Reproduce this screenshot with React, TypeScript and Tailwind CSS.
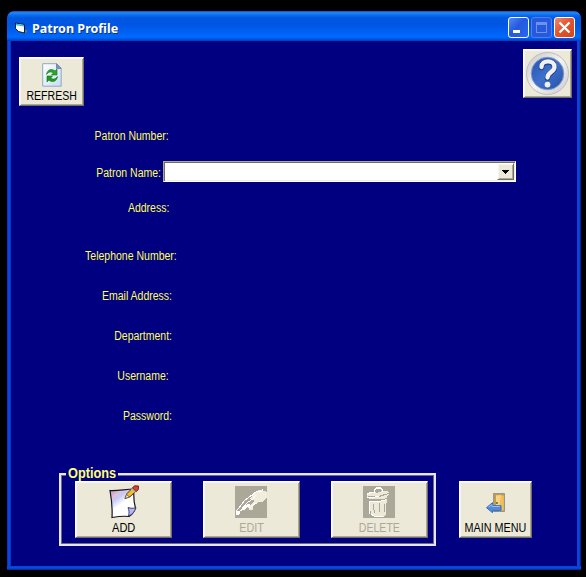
import type { ReactNode } from "react";

function Raised({ className = "", children }: { className?: string; children?: ReactNode }) {
  return (
    <div
      className={`bg-[#ece9d8] border border-t-white border-l-white border-r-[#716f64] border-b-[#716f64] shadow-[inset_1px_1px_0_#f7f5ec,inset_-1px_-1px_0_#aca899] ${className}`}
    >
      {children}
    </div>
  );
}

function FieldRow({ text, className }: { text: string; className: string }) {
  return (
    <div className={`flex justify-end text-[#ffff59] text-[12px] leading-4 h-4 whitespace-nowrap ${className}`}>
      <span className="shrink-0 origin-right scale-x-[.875]">{text}</span>
    </div>
  );
}

function RefreshIcon() {
  return (
    <svg width="20" height="24" viewBox="0 0 20 24" className="block">
      <defs>
        <linearGradient id="sheet" x1="0" y1="0" x2="1" y2="1">
          <stop offset="0" stopColor="#ffffff" />
          <stop offset="1" stopColor="#c7dcf5" />
        </linearGradient>
      </defs>
      <path d="M.7.7h14l4.500 4.500v18H.7z" fill="url(#sheet)" stroke="#92a9c5" />
      <path d="M14.500.7v4.700h4.700z" fill="#8296bd" stroke="#7488ad" />
      <path d="M4.500 11.500C5 6.500 10 5 13 8l2-2v6H9.500l1.800-2C8.500 8 6.500 9 4.500 11.500z" fill="#2ba42b" stroke="#138218" strokeWidth=".6" />
      <path d="M15.500 13.500C15 18.500 10 20 7 17l-2 2v-6h5.500l-1.800 2c2.800 2 4.800 1 6.800-1.500z" fill="#229922" stroke="#0c7611" strokeWidth=".6" />
    </svg>
  );
}

function HelpIcon() {
  return (
    <svg width="45" height="45" viewBox="0 0 45 45" className="block">
      <defs>
        <linearGradient id="ring" x1="0" y1="0" x2="1" y2="1">
          <stop offset="0" stopColor="#c5c5c8" />
          <stop offset=".5" stopColor="#f4f4f5" />
          <stop offset="1" stopColor="#c8c8ca" />
        </linearGradient>
        <linearGradient id="disc" x1="0" y1="0" x2="1" y2="1">
          <stop offset="0" stopColor="#2452b5" />
          <stop offset=".5" stopColor="#3f70cb" />
          <stop offset="1" stopColor="#2450a8" />
        </linearGradient>
      </defs>
      <circle cx="22.500" cy="22.500" r="21" fill="url(#ring)" stroke="#bdbdbe" />
      <circle cx="22.500" cy="22.500" r="16.300" fill="url(#disc)" stroke="#8d9cbd" />
      <path d="M16.500 16.500c0-7.500 13-7.500 13 0 0 5-7 5.200-7 10.500" fill="none" stroke="#1e418d" strokeWidth="5.600" strokeLinecap="round" />
      <path d="M16.500 16c0-7.500 13-7.500 13 0 0 5-7 5.200-7 10.500" fill="none" stroke="#f2f1ef" strokeWidth="4.300" strokeLinecap="round" />
      <circle cx="22.500" cy="33.600" r="2.900" fill="#eeeeef" />
    </svg>
  );
}

function AddIcon() {
  return (
    <svg width="32" height="34" viewBox="0 0 32 34" className="block">
      <defs>
        <linearGradient id="note" x1="0" y1="0" x2=".65" y2="1">
          <stop offset="0" stopColor="#b58bb9" />
          <stop offset=".25" stopColor="#dfc2dc" />
          <stop offset=".36" stopColor="#c4caf6" />
          <stop offset=".58" stopColor="#ffffff" />
        </linearGradient>
      </defs>
      <path d="M2 5.500c7 .5 14-1 24-1.500-.5 7-.5 13 1.500 19-1.500 4-3 6.500-6.500 8.500-6-.8-11 0-17 1C4.500 24 3.500 14 2 5.500z" fill="url(#note)" stroke="#17131c" strokeWidth="1.200" />
      <path d="M20.500 31c1-3 .5-6-.5-8.500 3 1 5 1 8 .2-1.500 4-3.500 6.800-7.500 8.300z" fill="#b6b8f2" stroke="#403c72" />
      <path d="M17 13.500l2-5 6-6 3.500 3.200-6.500 6z" fill="#f8bd25" stroke="#483423" />
      <path d="M17 13.500l1.500-4 3 2.500z" fill="#fae8c2" stroke="#5b493a" strokeWidth=".7" />
      <path d="M24.500 3l2-2.200 4 .2-.3 3.800-2 1.800z" fill="#d74635" stroke="#702718" />
      <path d="M23.300 3.800l4 3.500" stroke="#a5b8c8" strokeWidth="1.500" />
    </svg>
  );
}

function EditIcon() {
  return (
    <svg width="32" height="32" viewBox="0 0 32 32" shapeRendering="crispEdges" className="block -ml-px">
      <path d="M0 0h32v32H0z" fill="#aca899" />
      <path d="M17 10l5-5 2-1h3l1-1v2h2l2 2v4l-2 3-3 2h-3l-3 2-3 2v3l-1 1h-3v-2h-1v-2l3-1 1-2 3-2-2-1-3-1z" fill="#f0eddd" />
      <path d="M21 6L10 14 3 23 1 25v3h3l1-3 8-9 5-3 3-4" fill="none" stroke="#fff" />
      <path d="M2 25h3v3H2zM14 18l-4 1-3 3-2 3 4-1 4-3 2-2z" fill="#fff" />
      <path d="M17 10l4-4 2-1h4l1-2M14 21h2l2-2 3-2" fill="none" stroke="#fff" />
    </svg>
  );
}

function DeleteIcon() {
  return (
    <svg width="32" height="32" viewBox="0 0 32 32" shapeRendering="crispEdges" className="block -ml-px">
      <path d="M0 0h32v32H0z" fill="#aca899" />
      <path d="M4 8l3-2h5l2 1 5-2h5l2 1v3l-2 1v2l-5 1H7l-3-2z" fill="#ece9d8" />
      <path d="M11.500 6V4l2-2h4l2 2v2M4 8.500l3-2h5" fill="none" stroke="#fff" strokeWidth="1.300" />
      <path d="M5 10.500h11l6-2 4-1" fill="none" stroke="#aca899" />
      <path d="M4 11.500h5l7-1" fill="none" stroke="#fff" />
      <path d="M6 16l10-1 8-2-1 8v7l-3 3H11l-3-3-1-6z" fill="#ece9d8" />
      <path d="M6.500 28V16l10-.5 7-2M8 28l3 2h9" stroke="#fff" fill="none" />
      <path d="M10.500 18v6M11.500 24v3M16.500 17v9M21.500 18v8" stroke="#aca899" fill="none" />
    </svg>
  );
}

function DoorIcon() {
  return (
    <svg width="20" height="20" viewBox="0 0 20 20" className="block">
      <path d="M7.500.5h11v18h-11z" fill="#c29e46" stroke="#929792" />
      <path d="M10 2.500h7.800V17l-4.300 1.500L10 16z" fill="#f0bf57" />
      <path d="M10 2.500l5-.5-2 12-3 1z" fill="#f9d485" />
      <path d="M10 9h1.800v2H10z" fill="#68785c" />
      <path d="M.5 14.700l6-5v3H15v5H6.500v2z" fill="#538bda" stroke="#376cb7" />
      <path d="M2.500 14l3.500-2.500v2H14" fill="none" stroke="#92bbf2" />
    </svg>
  );
}

function TitleBar() {
  return (
    <header className="h-[30px] shrink-0 rounded-t-[7px] flex items-center pl-[7px] pr-[6px] bg-[linear-gradient(180deg,#0053d3_0%,#2687f8_6%,#086ff2_13%,#0058df_23%,#0056e3_45%,#0060f3_70%,#006aff_87%,#0055df_94%,#003cb8_100%)]">
      <svg width="14" height="13" viewBox="0 0 14 13" className="mt-[4px] shrink-0">
        <path d="M1.500 1l9 1.500v8.500l-6-1.500-3-3z" fill="#fff" stroke="#061d3d" />
        <path d="M2 2.500l8 1.300" stroke="#36bdbf" strokeWidth="1.500" />
        <path d="M11 7.500l3 1.500-3 2.500z" fill="#66737c" />
      </svg>
      <h1 className="ml-[4px] mt-[3px] font-['Noto_Sans'] text-[13px] leading-4 font-bold text-white origin-left scale-x-[.965] [text-shadow:1px_1px_0_#073587] whitespace-nowrap">Patron Profile</h1>
      <div className="ml-auto mt-[3px] flex gap-[2px]">
        <div className="size-[21px] rounded-[3px] border border-white bg-[linear-gradient(135deg,#5188f8,#2459de_45%,#2767f3)] flex items-end pb-[4px] pl-[4px]">
          <div className="w-[7px] h-[3px] bg-white" />
        </div>
        <div className="size-[21px] rounded-[3px] border border-[#527ff0] bg-[#2659dc] flex items-center justify-center">
          <div className="w-[11px] h-[11px] border border-t-[3px] border-[#6c91ef]" />
        </div>
        <div className="size-[21px] rounded-[3px] border border-white bg-[linear-gradient(135deg,#f08a6a,#e2572f_45%,#d0431f)] flex items-center justify-center">
          <svg width="13" height="13" viewBox="0 0 13 13"><path d="M1.500 1.500l10 10M11.500 1.500l-10 10" stroke="#fff" strokeWidth="2.300" /></svg>
        </div>
      </div>
    </header>
  );
}

export default function App() {
  return (
    <main className="w-[586px] h-[577px] overflow-hidden bg-black pl-[7px] pt-[11px] font-['Liberation_Sans',sans-serif]">
      <section className="w-[574px] h-[559px] flex flex-col rounded-t-[7px] overflow-hidden bg-[#0633c5]">
        <TitleBar />
        <div className="flex-1 min-h-0 bg-[linear-gradient(90deg,#0028a5_0px,#0b45dc_1px,#0847df_3px,#0024a0_4px,#000080_5px,#000080_569px,#0642da_570px,#0a49df_572px,#001b87_574px)]">
          <div className="mx-[4px] h-[525px] bg-[#000080] flex flex-col">
            <div className="flex justify-between pl-[8px] pr-[5px] pt-[8px] h-[87px] shrink-0">
              <Raised className="mt-[8px] w-[65px] h-[49px] flex flex-col items-center pt-[5px]">
                <RefreshIcon />
                <span className="text-[12px] leading-[16px] mt-px text-black scale-x-[.88]">REFRESH</span>
              </Raised>
              <Raised className="w-[49px] h-[49px] flex items-center justify-center">
                <HelpIcon />
              </Raised>
            </div>

            <div className="h-[345px] shrink-0">
              <FieldRow text="Patron Number:" className="w-[158px]" />
              <div className="flex items-center mt-[17px] h-[21px]">
                <FieldRow text="Patron Name:" className="w-[150px] mt-[3px]" />
                <div className="ml-[2px] w-[353px] h-[21px] bg-white border border-t-[#aca899] border-l-[#aca899] border-r-white border-b-white shadow-[inset_1px_1px_0_#716f64,inset_-1px_-1px_0_#f1efe2] flex justify-end p-px">
                  <Raised className="w-[17px] h-[17px] flex items-center justify-center">
                    <svg width="7" height="4" viewBox="0 0 7 4" shapeRendering="crispEdges"><path d="M0 0h7v1H6v1H5v1H4v1H3V3H2V2H1V1H0z" fill="#000" /></svg>
                  </Raised>
                </div>
              </div>
              <FieldRow text="Address:" className="w-[158px] mt-[18px]" />
              <FieldRow text="Telephone Number:" className="w-[166px] mt-[32px]" />
              <FieldRow text="Email Address:" className="w-[161px] mt-[24px]" />
              <FieldRow text="Department:" className="w-[161px] mt-[24px]" />
              <FieldRow text="Username:" className="w-[158px] mt-[24px]" />
              <FieldRow text="Password:" className="w-[161px] mt-[24px]" />
            </div>

            <div className="pl-[48px] flex items-start">
              <div className="relative w-[377px] h-[73px] border-2 border-[#e7e6ee] shadow-[inset_1px_1px_0_#6d6a83,inset_-1px_-1px_0_#6d6a83] flex gap-[31px] pl-[14px] pt-[6px]">
                <span className="absolute left-[5px] top-[-10px] w-[52px] h-4 pl-[2px] leading-4 bg-[#000080] text-[#ffff72] text-[14px] font-bold whitespace-nowrap"><span className="inline-block origin-left scale-x-[.91]">Options</span></span>
                <Raised className="relative w-[97px] h-[57px] flex flex-col items-center pt-[3px]">
                  <AddIcon />
                  <span className="text-[12px] leading-[16px] mt-px text-black scale-x-[.92]">ADD</span>
                </Raised>
                <Raised className="w-[97px] h-[57px] flex flex-col items-center pt-[4px]">
                  <EditIcon />
                  <span className="text-[12px] leading-[16px] mt-[2px] text-[#aca899] scale-x-[.9]">EDIT</span>
                </Raised>
                <Raised className="w-[97px] h-[57px] flex flex-col items-center pt-[4px]">
                  <DeleteIcon />
                  <span className="text-[12px] leading-[16px] mt-[2px] text-[#aca899] scale-x-[.88]">DELETE</span>
                </Raised>
              </div>
              <Raised className="ml-[23px] mt-[8px] w-[73px] h-[57px] flex flex-col items-center pt-[11px]">
                <DoorIcon />
                <span className="text-[12px] leading-[16px] mt-[7px] text-black whitespace-nowrap scale-x-[.9]">MAIN MENU</span>
              </Raised>
            </div>
          </div>
          <div className="h-[4px] bg-[linear-gradient(180deg,#0640cd,#0b4ee0_50%,#001f95)]" />
        </div>
      </section>
    </main>
  );
}
